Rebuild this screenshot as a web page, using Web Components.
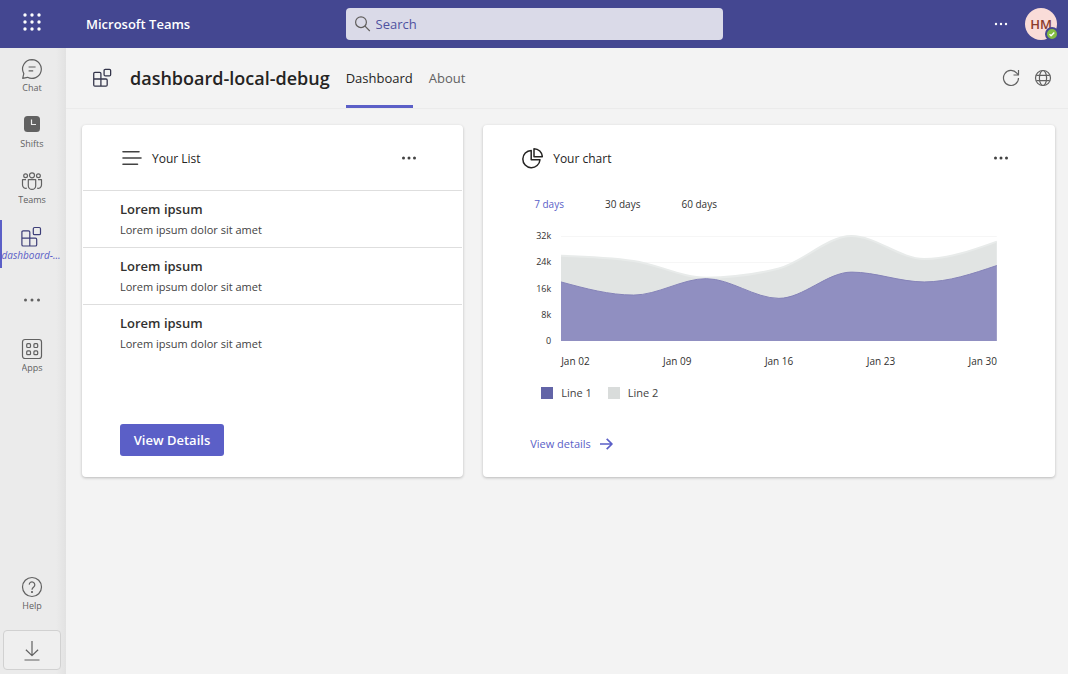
<!DOCTYPE html>
<html lang="en">
<head>
<meta charset="utf-8">
<title>Microsoft Teams</title>
<style>
  html, body { margin: 0; height: 100%; }
  body {
    font-family: "Open Sans", "Noto Sans", sans-serif;
    font-size: 13px; color: #252423; background: #f3f3f3;
    --brand: #5b5fc7; --bar: #444791; --muted: #616161;
  }
</style>
</head>
<body>
<teams-shell></teams-shell>

<script>
const ICONS = {
  waffle: '<g fill="currentColor" stroke="none"><circle cx="4" cy="4" r="1.700"/><circle cx="11" cy="4" r="1.700"/><circle cx="18" cy="4" r="1.700"/><circle cx="4" cy="11" r="1.700"/><circle cx="11" cy="11" r="1.700"/><circle cx="18" cy="11" r="1.700"/><circle cx="4" cy="18" r="1.700"/><circle cx="11" cy="18" r="1.700"/><circle cx="18" cy="18" r="1.700"/></g>',
  search: '<circle cx="9" cy="9.200" r="5.400"/><path d="M13 13.200l4.800 4.800"/>',
  more: '<g fill="currentColor" stroke="none"><circle cx="5.500" cy="11" r="1.500"/><circle cx="11" cy="11" r="1.500"/><circle cx="16.500" cy="11" r="1.500"/></g>',
  moreSmall: '<g fill="currentColor" stroke="none"><circle cx="6" cy="11" r="1.200"/><circle cx="11" cy="11" r="1.200"/><circle cx="16" cy="11" r="1.200"/></g>',
  moreWide: '<g fill="currentColor" stroke="none"><circle cx="4.500" cy="11" r="1.500"/><circle cx="11" cy="11" r="1.500"/><circle cx="17.500" cy="11" r="1.500"/></g>',
  chat: '<path d="M11 1.600a9.400 9.400 0 1 1-4.500 17.700L1.700 20.400l1.100-4.800A9.400 9.400 0 0 1 11 1.600z"/><path d="M7.600 9h7M7.600 12.800h4.600"/>',
  shifts: '<rect x="3" y="2" width="16" height="16" rx="3.500" fill="currentColor" stroke="none"/><path d="M10.500 5.500v5H15" stroke="#ebebeb"/>',
  teams: '<circle cx="11" cy="5.300" r="2.500"/><circle cx="4.600" cy="5.800" r="1.900"/><circle cx="17.400" cy="5.800" r="1.900"/><path d="M7.300 9.700h7.400v6a3.700 3.700 0 0 1-7.400 0zM5 9.700H1.500V15a3.400 3.400 0 0 0 4.300 3.200M17 9.700h3.500V15a3.400 3.400 0 0 1-4.300 3.200"/>',
  blocks: '<path d="M3.200 4.800h5.300q1.300 0 1.300 1.300v6h5.600q1.300 0 1.300 1.300v5.300q0 1.300-1.300 1.300H3.200q-1.300 0-1.300-1.300V6.100q0-1.300 1.300-1.300zM1.900 12.100h7.900V20"/><rect x="13.300" y="1.500" width="7.200" height="7.200" rx="1.300"/>',
  apps: '<rect x="1.500" y="1.500" width="19" height="19" rx="2.500"/><rect x="5.700" y="5.700" width="3.800" height="3.800" rx="1"/><rect x="12.900" y="5.700" width="3.800" height="3.800" rx="1"/><rect x="5.700" y="12.900" width="3.800" height="3.800" rx="1"/><rect x="12.900" y="12.900" width="3.800" height="3.800" rx="1"/>',
  help: '<circle cx="11" cy="11" r="9.500"/><path d="M8.200 8.600a2.800 2.800 0 1 1 4.700 2.200c-1.200 1-1.900 1.500-1.900 2.900"/><circle cx="11" cy="16" r=".5" fill="currentColor"/>',
  download: '<path d="M11 2v14M4.900 10.700l6.100 5.900 6.100-5.900M3.500 21h15"/>',
  refresh: '<path d="M18.500 11a7.500 7.500 0 1 1-1.700-4.800l1.500 1.600"/><path d="M18.500 3v5h-5"/>',
  globe: '<circle cx="11" cy="11" r="7.500"/><ellipse cx="11" cy="11" rx="3.600" ry="7.500"/><path d="M4.300 8.300h13.400M4.300 13.700h13.400"/>',
  list: '<path d="M3 4.800h16M3 11h18M3 17.200h14.500" stroke-linecap="round"/>',
  pie: '<path d="M10.200 3.500A8.600 8.600 0 1 0 19 12.800H10.200z"/><path d="M13 1.700v8h8.300a8.300 8.300 0 0 0-8.300-8z"/>',
  arrow: '<path d="M5 11h12M11.700 5.800l5.300 5.200-5.300 5.200"/>',
  check: '<path d="M5.500 11.500l3.500 3.300 7-7"/>'
};

function define(name, html, setup) {
  const template = document.createElement('template');
  template.innerHTML = html;
  customElements.define(name, class extends HTMLElement {
    constructor() {
      super();
      this.attachShadow({ mode: 'open' }).append(template.content.cloneNode(true));
    }
    connectedCallback() { if (setup) setup.call(this, this.shadowRoot); }
  });
}

define('ui-icon', `
  <style>
    :host { display: inline-flex; flex: none; width: var(--size, 22px); height: var(--size, 22px); }
    svg { width: 100%; height: 100%; fill: none; stroke: currentColor; stroke-width: var(--stroke, 1.2); stroke-linejoin: round; }
  </style>
  <svg viewBox="0 0 22 22" aria-hidden="true"></svg>`,
  function (root) { root.querySelector('svg').innerHTML = ICONS[this.getAttribute('name')] || ''; });

define('teams-header', `
  <style>
    :host { display: grid; grid-template-columns: 1fr minmax(160px, 377px) 1fr; align-items: center; height: 48px; background: var(--bar); color: #fff; }
    .brand, .tools { display: flex; align-items: center; }
    button { display: flex; padding: 0; border: 0; background: none; color: inherit; font: inherit; }
    .waffle { width: 64px; height: 44px; align-items: center; justify-content: center; }
    .brand { align-self: start; }
    .name { margin-left: 22px; font-weight: 600; line-height: 48px; white-space: nowrap; }
    .search { display: flex; align-items: center; gap: 2px; height: 32px; padding: 0 6px; border-radius: 4px; background: #dadae8; color: #605e5c; }
    input { flex: 1; min-width: 0; padding: 0; border: 0; outline: 0; background: none; font: inherit; color: var(--bar); }
    input::placeholder { color: #4f52a0; opacity: 1; }
    .waffle { align-self: flex-start; }
    .tools { justify-content: flex-end; gap: 13px; padding-right: 11px; }
    .avatar { position: relative; width: 32px; height: 32px; align-items: center; justify-content: center; border-radius: 50%; background: #f9dcd8; color: #8a3b2c; font-weight: 600; }
    .status { position: absolute; right: -2px; bottom: -1px; display: flex; border: 2px solid var(--bar); border-radius: 50%; background: #84bd41; color: #fff; --size: 10px; --stroke: 3; }
  </style>
  <div class="brand">
    <button class="waffle" aria-label="App launcher"><ui-icon name="waffle"></ui-icon></button>
    <span class="name">Microsoft Teams</span>
  </div>
  <label class="search"><ui-icon name="search"></ui-icon><input type="text" placeholder="Search" aria-label="Search"></label>
  <div class="tools">
    <button aria-label="More options"><ui-icon name="moreSmall"></ui-icon></button>
    <button class="avatar" aria-label="Account">HM<span class="status"><ui-icon name="check"></ui-icon></span></button>
  </div>`);

define('rail-item', `
  <style>
    :host { display: block; height: 56px; color: var(--muted); }
    button { display: flex; flex-direction: column; align-items: center; width: 100%; height: 100%; padding: 10px 0 0; border: 0; background: none; color: inherit; font: inherit; font-size: 9px; line-height: 14px; }
    .icon { display: flex; }
    .label { margin-top: 1px; max-width: 60px; overflow: hidden; white-space: nowrap; text-overflow: ellipsis; }
    :host([bare]) button { justify-content: center; padding: 0; }
    :host([bare]) .label { display: none; }
    :host([active]) { box-sizing: border-box; height: 48px; margin: 4px 0; color: #3d3e78; box-shadow: inset 2px 0 var(--brand); }
    :host([active]) button { padding: 6px 2px 0 0; font-size: 10px; }
    :host([active]) .label { color: var(--brand); font-style: italic; margin-top: 0; }
  </style>
  <button><span class="icon"></span><span class="label"><slot></slot></span></button>`,
  function (root) {
    root.querySelector('.icon').innerHTML = `<ui-icon name="${this.getAttribute('icon')}"></ui-icon>`;
    if (this.hasAttribute('bare')) root.querySelector('button').setAttribute('aria-label', 'More apps');
  });

define('teams-rail', `
  <style>
    :host { display: flex; flex-direction: column; width: 64px; padding-right: 2px; background: linear-gradient(90deg, #ebebeb 56px, #e2e2e2 66px); }
    nav { display: flex; flex-direction: column; flex: 1; padding-bottom: 8px; }
    .space { flex: 1; }
    .download { display: flex; align-items: center; justify-content: center; height: 40px; margin: 0 3px 4px; padding: 0; border: 1px solid #d1d1d1; border-radius: 4px; background: #efefef; color: var(--muted); }
  </style>
  <nav aria-label="Apps">
    <rail-item icon="chat">Chat</rail-item>
    <rail-item icon="shifts">Shifts</rail-item>
    <rail-item icon="teams">Teams</rail-item>
    <rail-item icon="blocks" active>dashboard-...</rail-item>
    <rail-item icon="moreWide" bare></rail-item>
    <rail-item icon="apps">Apps</rail-item>
    <span class="space"></span>
    <rail-item icon="help">Help</rail-item>
  </nav>
  <button class="download" aria-label="Download"><ui-icon name="download"></ui-icon></button>`);

define('app-bar', `
  <style>
    :host { display: flex; align-items: center; height: 60px; padding: 0 14px 0 26px; border-bottom: 1px solid #ebebeb; }
    h1 { margin: 0 16px 0 18px; font-size: 18px; line-height: 24px; font-weight: 600; white-space: nowrap; }
    nav { display: flex; align-self: stretch; gap: 16px; }
    a { display: flex; align-items: center; box-sizing: border-box; padding-top: 3px; border-bottom: 3px solid transparent; color: var(--muted); text-decoration: none; }
    a[aria-current] { color: #252423; border-color: var(--brand); font-weight: 500; }
    .tools { display: flex; gap: 10px; margin-left: auto; color: var(--muted); }
    button { display: flex; padding: 0; border: 0; background: none; color: inherit; }
  </style>
  <ui-icon name="blocks" style="--size:20px;--stroke:1.4;color:#33344a"></ui-icon>
  <h1>dashboard-local-debug</h1>
  <nav aria-label="Tabs"><a href="#dashboard" aria-current="page">Dashboard</a><a href="#about">About</a></nav>
  <div class="tools">
    <button aria-label="Refresh"><ui-icon name="refresh"></ui-icon></button>
    <button aria-label="Language"><ui-icon name="globe"></ui-icon></button>
  </div>`);

define('dash-card', `
  <style>
    :host { display: flex; flex-direction: column; min-width: 0; min-height: 352px; border-radius: 4px; background: #fff; box-shadow: 0 1px 3px rgba(0,0,0,.24); }
    header { display: flex; align-items: center; gap: 10px; height: 65px; padding: 0 43px 0 38px; }
    h2 { flex: 1; margin: 0; font-size: 12px; line-height: 16px; padding-top: 2px; font-weight: 500; }
    button { display: flex; padding: 0; border: 0; background: none; color: #424242; }
  </style>
  <header><slot name="icon"></slot><h2><slot name="title"></slot></h2><button aria-label="Card options"><ui-icon name="more"></ui-icon></button></header>
  <slot></slot>`);

define('list-row', `
  <style>
    :host { display: block; box-sizing: border-box; height: 57px; margin: 0 1px; padding: 8px 37px 0; border-top: 1px solid #dedede; }
    h3, p { margin: 0; }
    h3 { font-size: 13px; line-height: 20px; font-weight: 600; color: #323130; }
    p { font-size: 11px; line-height: 22px; color: #424242; }
  </style>
  <h3><slot name="title"></slot></h3><p><slot></slot></p>`);

define('area-chart', `
  <style>
    :host { display: grid; grid-template-columns: 30px 1fr; column-gap: 10px; }
    .y { display: flex; flex-direction: column; justify-content: space-between; height: 117px; text-align: right; }
    .y, .x { font-size: 10px; line-height: 12px; color: #323130; }
    .y { font-size: 9px; font-weight: 500; }
    svg { display: block; width: 100%; height: 105px; margin-top: 6px; overflow: visible; }
    .x { grid-column: 2; display: flex; justify-content: space-between; margin-top: 8px; }
  </style>
  <div class="y"><span>32k</span><span>24k</span><span>16k</span><span>8k</span><span>0</span></div>
  <svg viewBox="0 0 436 105" preserveAspectRatio="none" role="img" aria-label="Line 1 and Line 2 over January"></svg>
  <div class="x"><span>Jan 02</span><span>Jan 09</span><span>Jan 16</span><span>Jan 23</span><span>Jan 30</span></div>`,
  function (root) {
    const W = 436, H = 105, MAX = 32;
    // Monotone cubic interpolation through evenly spaced values.
    const curve = values => {
      const dx = W / (values.length - 1), y = values.map(v => H - v / MAX * H), n = y.length;
      const d = y.slice(1).map((v, i) => (v - y[i]) / dx), t = Array(n).fill(0);
      for (let i = 1; i < n - 1; i++) t[i] = d[i - 1] * d[i] <= 0 ? 0 :
        Math.sign(d[i]) * Math.min(2 * Math.abs(d[i - 1]), 2 * Math.abs(d[i]), Math.abs(d[i - 1] + d[i]) / 2);
      t[0] = (3 * d[0] - t[1]) / 2; t[n - 1] = (3 * d[n - 2] - t[n - 2]) / 2;
      let p = `M0 ${y[0]}`;
      for (let i = 0; i < n - 1; i++) p += `C${(i + 1 / 3) * dx} ${y[i] + t[i] * dx / 3} ${(i + 2 / 3) * dx} ${y[i + 1] - t[i + 1] * dx / 3} ${(i + 1) * dx} ${y[i + 1]}`;
      return p;
    };
    const one = curve([18, 14, 19, 13, 21, 18, 23]);
    const two = curve([26, 24.4, 19.3, 22.1, 32, 25, 30.3]);
    root.querySelector('svg').innerHTML = `
      <path d="M0 .5H436M0 26.500H436" stroke="#f6f6f6" fill="none"/>
      <path d="${two}V${H}H0Z" fill="#e1e4e3"/><path d="${two}" fill="none" stroke="#e8ebea" stroke-width="2"/>
      <path d="${one}V${H}H0Z" fill="#908fc1"/><path d="${one}" fill="none" stroke="#8583b8"/>`;
  });

define('list-card', `
  <style>
    :host { display: grid; min-width: 0; }
    .action { margin: auto 38px 21px; align-self: flex-start; width: 104px; height: 32px; padding: 0; border: 0; border-radius: 3px; background: var(--brand); color: #fff; font: inherit; font-weight: 600; }
  </style>
  <dash-card>
    <ui-icon slot="icon" name="list" style="--stroke:1.6;color:#424242"></ui-icon><span slot="title">Your List</span>
    <list-row><span slot="title">Lorem ipsum</span>Lorem ipsum dolor sit amet</list-row>
    <list-row><span slot="title">Lorem ipsum</span>Lorem ipsum dolor sit amet</list-row>
    <list-row><span slot="title">Lorem ipsum</span>Lorem ipsum dolor sit amet</list-row>
    <button class="action">View Details</button>
  </dash-card>`);

define('chart-card', `
  <style>
    :host { display: grid; min-width: 0; }
    .ranges { display: flex; gap: 41px; padding: 6px 51px 0; }
    .ranges button { padding: 0; border: 0; background: none; font: inherit; font-size: 10px; line-height: 16px; color: #323130; }
    .ranges button[aria-pressed=true] { color: var(--brand); font-weight: 500; }
    area-chart { margin: 18px 58px 0 38px; }
    .legend { display: flex; gap: 16px; margin: 18px 58px 0; font-size: 11px; line-height: 16px; color: #424242; }
    .legend span { display: flex; align-items: center; gap: 8px; }
    i { width: 12px; height: 12px; background: #6264a7; }
    .second i { background: #d9dcdb; }
    a { display: flex; align-items: center; align-self: flex-start; gap: 4px; margin: auto 47px 22px; color: var(--brand); font-size: 11px; line-height: 22px; text-decoration: none; }
  </style>
  <dash-card>
    <ui-icon slot="icon" name="pie" style="--stroke:1.5"></ui-icon><span slot="title">Your chart</span>
    <div class="ranges"><button aria-pressed="true">7 days</button><button>30 days</button><button>60 days</button></div>
    <area-chart></area-chart>
    <div class="legend"><span><i></i>Line 1</span><span class="second"><i></i>Line 2</span></div>
    <a href="#details">View details <ui-icon name="arrow" style="--stroke:1.7"></ui-icon></a>
  </dash-card>`);

define('teams-shell', `
  <style>
    :host { display: grid; grid-template: auto 1fr / auto 1fr; min-height: 100vh; }
    teams-header { grid-column: 1 / -1; }
    main { min-width: 0; }
    .cards { display: grid; grid-template-columns: 2fr 3fr; gap: 20px; padding: 16px 13px 16px 16px; }
  </style>
  <teams-header></teams-header>
  <teams-rail></teams-rail>
  <main><app-bar></app-bar><div class="cards"><list-card></list-card><chart-card></chart-card></div></main>`);
</script>
</body>
</html>
